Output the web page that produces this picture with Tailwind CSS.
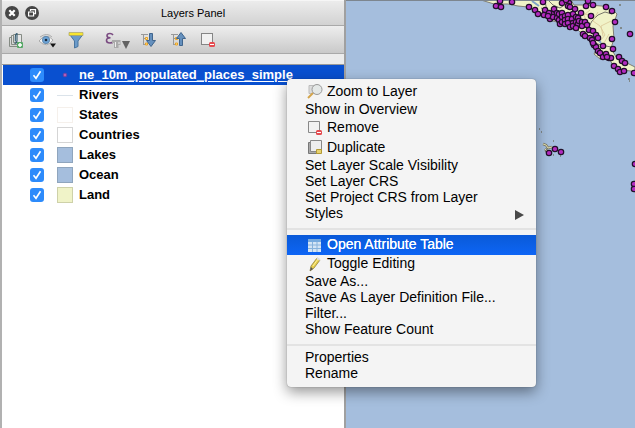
<!DOCTYPE html>
<html lang="en">
<head>
<meta charset="utf-8">
<title>Layers Panel</title>
<script src="https://cdn.jsdelivr.net/npm/@tailwindcss/browser@4"></script>
</head>
<body class="w-[635px] h-[428px] overflow-hidden bg-white font-['Liberation_Sans',Arial,sans-serif] text-black">
<div class="relative flex w-[635px] h-[428px]">
  <!-- Layers panel -->
  <section class="flex flex-col w-[346px] h-full border-l-2 border-r-2 border-l-[#b1b1b1] border-r-[#a0a0a0]">
    <header class="flex items-center relative h-[26px] bg-linear-to-b from-[#ececec] to-[#d2d2d2] border-b border-[#a9a9a9] border-t border-t-[#f6f6f6] pl-[3px] gap-[6px]">
      <svg class="size-[14px]" viewBox="0 0 14 14"><circle cx="7" cy="7" r="7" fill="#464646"/><path d="M4.300 4.300l5.400 5.400M9.700 4.300l-5.400 5.400" stroke="#fff" stroke-width="2.200"/></svg>
      <svg class="size-[14px]" viewBox="0 0 14 14"><circle cx="7" cy="7" r="7" fill="#464646"/><path d="M5.500 5V3.700h5v4H9.300M3.600 6h5v4h-5z" stroke="#fff" stroke-width="1.200" fill="none"/></svg>
      <h1 class="absolute left-0 w-[382px] text-center text-[11px] leading-[14px] top-[5px]">Layers Panel</h1>
    </header>
    <div class="h-[28px] shrink-0 bg-linear-to-b from-[#eeeeee] to-[#c9c9c9] border-b border-[#a9a9a9]">
      <svg class="w-[230px] h-[27px]" viewBox="2 26 230 27" fill="none">
        <!-- add group -->
        <path d="M12 37.500H9.500v9H18M14 35.500h-2.500v9H19" stroke="#858b84"/><path d="M13.500 34.500h8v8h-8z" fill="#e6e6e6" stroke="#858b84"/>
        <path d="M14.500 43.500q2.500 0 2.500-3v-7q-1.700 0-1.700 4v4" stroke="#345b70" stroke-width="1.100"/>
        <rect x="17" y="42" width="6" height="6" rx="1" fill="#57a867"/><path d="M20 43v4M18 45h4" stroke="#fff" stroke-width="1.500"/>
        <!-- visibility -->
        <path d="M39 41q7-9 14-1q-6 9-14 1z" fill="#f5f5f5" stroke="#aaa"/><path d="M40 37q7-5 12 0" stroke="#aaa"/><circle cx="46" cy="40" r="3.700" fill="#6da3d5" stroke="#50789e" stroke-width=".7"/><circle cx="46" cy="40" r="1.300" fill="#1c2d40"/><path d="M50 43.500h6l-3 4z" fill="#151515"/>
        <!-- filter -->
        <path d="M70 35l4.500 6v7l3.500-1.500v-5.500l4.500-6z" fill="#6b9bca" stroke="#49759f"/><path d="M69 32.500h14v3H69z" fill="#f7e530" stroke="#a9a36c" stroke-width=".7"/>
        <!-- expression filter -->
        <path d="M113 35q-1-1.500-3-1.500-3 0-3 2.200 0 2.100 3.500 2.100-4 0-4 2.700 0 2.500 3.500 2.500 2.500 0 3.500-1.500" stroke="#7a4b81" stroke-width="1.600"/>
        <path d="M112 40h8.500v5h-2v3h-4.500v-5h-2z" fill="#aaa"/><path d="M115.500 42v5M119 42v2" stroke="#eee"/><path d="M122 41h8l-4 8z" fill="#626262"/>
        <!-- expand all -->
        <g><path d="M141 34.500h7M143.500 34v11M143.500 38.500h3M143.500 44.500h3" stroke="#989898"/><path d="M145.500 37.500h2v2h-2zM145.500 43h2v2h-2z" stroke="#e9a424" fill="#ffe19b"/><path d="M149.500 33.500h3v7h3l-4.500 6-4.500-6h3z" fill="#6590bd" stroke="#40658d"/></g>
        <!-- collapse all -->
        <g><path d="M171 34.500h7M173.500 34v11M173.500 38.500h3M173.500 44.500h3" stroke="#989898"/><path d="M175.500 37.500h2v2h-2zM175.500 43h2v2h-2z" stroke="#e9a424" fill="#ffe19b"/><path d="M179.500 45.500h3v-7h3l-4.500-6-4.500 6h3z" fill="#6590bd" stroke="#40658d"/></g>
        <!-- remove -->
        <rect x="201.500" y="33.500" width="11" height="11" fill="#f1f1f1" stroke="#858585"/><rect x="209" y="42" width="6" height="5" rx="1.500" fill="#e54b50"/><path d="M210 44.500h4" stroke="#fff"/>
      </svg>
    </div>
    <div class="h-[11px] shrink-0 bg-[#ececec] border-b border-[#999]"></div>
    <ul class="flex flex-col grow bg-white pl-px text-[13px] leading-[20px] font-bold">
      <li class="flex items-center h-[20px] bg-[#0950d0] text-white"><svg class="ml-[27px] size-[14px]" viewBox="0 0 14 14"><rect width="14" height="14" rx="3" fill="#2d8bfb"/><path d="M3.500 7.300l2.500 3 4.500-7" stroke="#fff" stroke-width="1.600" fill="none"/></svg><svg class="ml-[13px] mr-[6px] size-[16px]" viewBox="0 0 16 16"><circle cx="8" cy="8" r="1.900" fill="#b35cb8" stroke="#5b3fa0" stroke-width=".8"/></svg><span class="underline underline-offset-2">ne_10m_populated_places_simple</span></li>
      <li class="flex items-center h-[20px]"><svg class="ml-[27px] size-[14px]" viewBox="0 0 14 14"><rect width="14" height="14" rx="3" fill="#2d8bfb"/><path d="M3.500 7.300l2.500 3 4.500-7" stroke="#fff" stroke-width="1.600" fill="none"/></svg><i class="ml-[13px] mr-[6px] w-[16px] h-px bg-[#dbe3ea]"></i><span>Rivers</span></li>
      <li class="flex items-center h-[20px]"><svg class="ml-[27px] size-[14px]" viewBox="0 0 14 14"><rect width="14" height="14" rx="3" fill="#2d8bfb"/><path d="M3.500 7.300l2.500 3 4.500-7" stroke="#fff" stroke-width="1.600" fill="none"/></svg><i class="ml-[13px] mr-[6px] size-[16px] border border-[#f5f0eb]"></i><span>States</span></li>
      <li class="flex items-center h-[20px]"><svg class="ml-[27px] size-[14px]" viewBox="0 0 14 14"><rect width="14" height="14" rx="3" fill="#2d8bfb"/><path d="M3.500 7.300l2.500 3 4.500-7" stroke="#fff" stroke-width="1.600" fill="none"/></svg><i class="ml-[13px] mr-[6px] size-[16px] border border-[#d5d5d5]"></i><span>Countries</span></li>
      <li class="flex items-center h-[20px]"><svg class="ml-[27px] size-[14px]" viewBox="0 0 14 14"><rect width="14" height="14" rx="3" fill="#2d8bfb"/><path d="M3.500 7.300l2.500 3 4.500-7" stroke="#fff" stroke-width="1.600" fill="none"/></svg><i class="ml-[13px] mr-[6px] size-[16px] border border-[#8fa5bd] bg-[#a5bedd]"></i><span>Lakes</span></li>
      <li class="flex items-center h-[20px]"><svg class="ml-[27px] size-[14px]" viewBox="0 0 14 14"><rect width="14" height="14" rx="3" fill="#2d8bfb"/><path d="M3.500 7.300l2.500 3 4.500-7" stroke="#fff" stroke-width="1.600" fill="none"/></svg><i class="ml-[13px] mr-[6px] size-[16px] border border-[#8fa5bd] bg-[#a5bedd]"></i><span>Ocean</span></li>
      <li class="flex items-center h-[20px]"><svg class="ml-[27px] size-[14px]" viewBox="0 0 14 14"><rect width="14" height="14" rx="3" fill="#2d8bfb"/><path d="M3.500 7.300l2.500 3 4.500-7" stroke="#fff" stroke-width="1.600" fill="none"/></svg><i class="ml-[13px] mr-[6px] size-[16px] border border-[#ced1a9] bg-[#f0f3c8]"></i><span>Land</span></li>
    </ul>
  </section>
  <!-- Map canvas -->
  <svg class="w-[289px] h-[428px] bg-[#a5bedd]" viewBox="346 0 289 428" fill="none">
    <path d="M481 0L494 4L508 4L518 6L528 7L538 13L549 20L561 23L575 27L583 35L592 42L597 48L594 54L600 59L610 60L614 67L621 70L631 71L635 76V67L625 62L616 57L611 48L614 39L613 26L617 14L612 9L602 6L588 5L574 5L571 0Z" fill="#f0f3c8" stroke="#807f76"/>
    <path d="M548 0l5 5 7 3 6-4M587 30l5-9 6-6 7-3 7 2M592 42l9 3 10 2M541 8l10 4 7-5M545 1l2 10 6 4" stroke="#77776b"/>
    <path d="M598 12l-5 9 7 5 5 9-4 5M611 21l-10 5 2 10M590 10l-6 5 3 8M604 43l5-9M579 13l11 2" stroke="#d9c795" stroke-width=".8"/>
    <path d="M532 1l7 5M596 37l5 6" stroke="#7ea4c8" stroke-width="2"/>
    <path d="M346 .500h289" stroke="#7d868f"/>
    <path d="M545 151l3 1M550 147h1M553 141h1M539 129h1M541 132h1M553 155h1M560 156h1M628 79h2M629 81h1M619 5h2M620 28h2" stroke="#74786f" stroke-width="1.500"/>
    <path d="M543 144l3 1 2 3 4-1M545 149l3 3-2 1" stroke="#7d7c68" stroke-width="2.500"/><path d="M543 144l3 1 2 3 4-1M545 149l3 3" stroke="#e2dfb1"/>
    <g id="places" fill="#b32bc0" stroke="#211029" stroke-width="1.200"></g>
  </svg>
  <!-- Context menu -->
  <nav class="absolute left-[287px] top-[79px] w-[249px] h-[308px] rounded-[4px] bg-[#f4f4f4] shadow-[0_0_1px_rgba(0,0,0,.5),0_5px_14px_rgba(0,0,0,.42)] flex flex-col text-[14px] leading-[16px] whitespace-nowrap pt-[2px]">
    <div class="flex items-center h-[20px] pl-[20px]"><svg class="size-[16px] mr-[4px]" viewBox="0 0 16 16" fill="none"><path d="M2 2.500h8v8H2z" fill="#ddd" stroke="#bbb"/><path d="M1 15l5-5" stroke="#d4a44b" stroke-width="2"/><circle cx="10" cy="6.500" r="5" fill="#e4e8e7" stroke="#999"/></svg>Zoom to Layer</div>
    <div class="h-[16px] pl-[18px]">Show in Overview</div>
    <div class="flex items-center h-[20px] pl-[20px]"><svg class="size-[16px] mr-[4px]" viewBox="0 0 16 16" fill="none"><path d="M1.500 2.500h11v11h-11z" fill="#f1f1f1" stroke="#888"/><rect x="9" y="11" width="6" height="5" rx="1.500" fill="#e54b50"/><path d="M10 13.500h4" stroke="#fff"/></svg>Remove</div>
    <div class="flex items-center h-[20px] pl-[20px]"><svg class="size-[16px] mr-[4px]" viewBox="0 0 16 16" fill="none"><path d="M1.500 3.500h10v11h-10z" fill="#aaa" stroke="#777"/><path d="M3.500 1.500h11v11h-11z" fill="#eee" stroke="#888"/><path d="M9.500 10.500h5v4h-5z" fill="#e8d370" stroke="#b39a35"/></svg>Duplicate</div>
    <div class="h-[16px] pl-[18px]">Set Layer Scale Visibility</div>
    <div class="h-[16px] pl-[18px]">Set Layer CRS</div>
    <div class="h-[16px] pl-[18px]">Set Project CRS from Layer</div>
    <div class="flex items-center justify-between h-[16px] pl-[18px] pr-[12px]">Styles<svg class="w-[9px] h-[10px] mt-[3px]" viewBox="0 0 9 10"><path d="M0 0l9 5-9 5z" fill="#484848"/></svg></div>
    <div class="h-[2px] shrink-0 bg-[#e3e3e3] mt-[7px] mb-[5px]"></div>
    <div class="flex items-center h-[20px] shrink-0 pl-[20px] text-white bg-linear-to-b from-[#0a5ad8] to-[#0d65f5] [text-shadow:0_0_.5px_white]"><svg class="size-[16px] mr-[4px]" viewBox="0 0 16 16" fill="none"><path d="M1 2h13v13H1z" fill="#d4e4f5"/><path d="M1 2h13v3H1z" fill="#77aade"/><path d="M5.500 5v10M10 5v10M1 8h13M1 11.500h13" stroke="#87b2dc"/></svg><span class="pb-[3px]">Open Attribute Table</span></div>
    <div class="flex items-center h-[18px] pl-[20px]"><svg class="size-[16px] mr-[4px]" viewBox="0 0 16 16" fill="none"><path d="M3 15l1-5 6-8 3 2-6 8z" fill="#e6cf4f" stroke="#8f803c" stroke-width=".8"/><path d="M6 10l5-7" stroke="#fff19b"/><path d="M3 15l1-4 2 2z" fill="#555"/><path d="M10 2l3 2" stroke="#ddd" stroke-width="2"/></svg><span class="pb-[2px]">Toggle Editing</span></div>
    <div class="h-[16px] pl-[18px]">Save As...</div>
    <div class="h-[16px] pl-[18px]">Save As Layer Definition File...</div>
    <div class="h-[16px] pl-[18px]">Filter...</div>
    <div class="h-[16px] pl-[18px]">Show Feature Count</div>
    <div class="h-[2px] shrink-0 bg-[#e3e3e3] mt-[7px] mb-[3px]"></div>
    <div class="h-[16px] pl-[18px]">Properties</div>
    <div class="h-[16px] pl-[18px]">Rename</div>
  </nav>
</div>
<script>
  // Populated place markers in canvas coordinates
  const places = [[496,6],[501,7],[500,1],[512,2],[529,7],[535,10],[538,14],[545,10],[544,15],[550,19],[552,14],[554,9],[553,17],[562,3],[569,3],[568,6],[570,7],[575,9],[581,13],[586,6],[588,1],[593,5],[606,7],[612,11],[591,16],[615,22],[630,34],[612,39],[613,49],[603,46],[549,13],[548,16],[557,13],[557,18],[559,14],[559,20],[560,24],[562,13],[562,17],[562,22],[565,16],[565,20],[565,24],[568,15],[568,19],[568,23],[570,27],[572,19],[573,14],[573,23],[573,26],[576,17],[576,22],[578,18],[578,24],[576,28],[579,21],[582,22],[582,26],[585,22],[587,25],[589,30],[593,31],[583,34],[585,36],[590,38],[592,40],[596,35],[598,38],[594,45],[596,47],[593,43],[598,51],[600,53],[603,57],[606,54],[609,58],[611,58],[607,57],[619,57],[622,61],[625,63],[614,66],[618,69],[620,72],[624,71],[634,73],[549,153],[555,149],[561,152],[635,164],[634,184],[634,189],[543,2],[566,0]];
  const group = document.getElementById('places');
  for (const [x, y] of places) {
    const dot = document.createElementNS('http://www.w3.org/2000/svg', 'circle');
    dot.setAttribute('cx', x);
    dot.setAttribute('cy', y);
    dot.setAttribute('r', 2.7);
    group.append(dot);
  }
</script>
</body>
</html>
